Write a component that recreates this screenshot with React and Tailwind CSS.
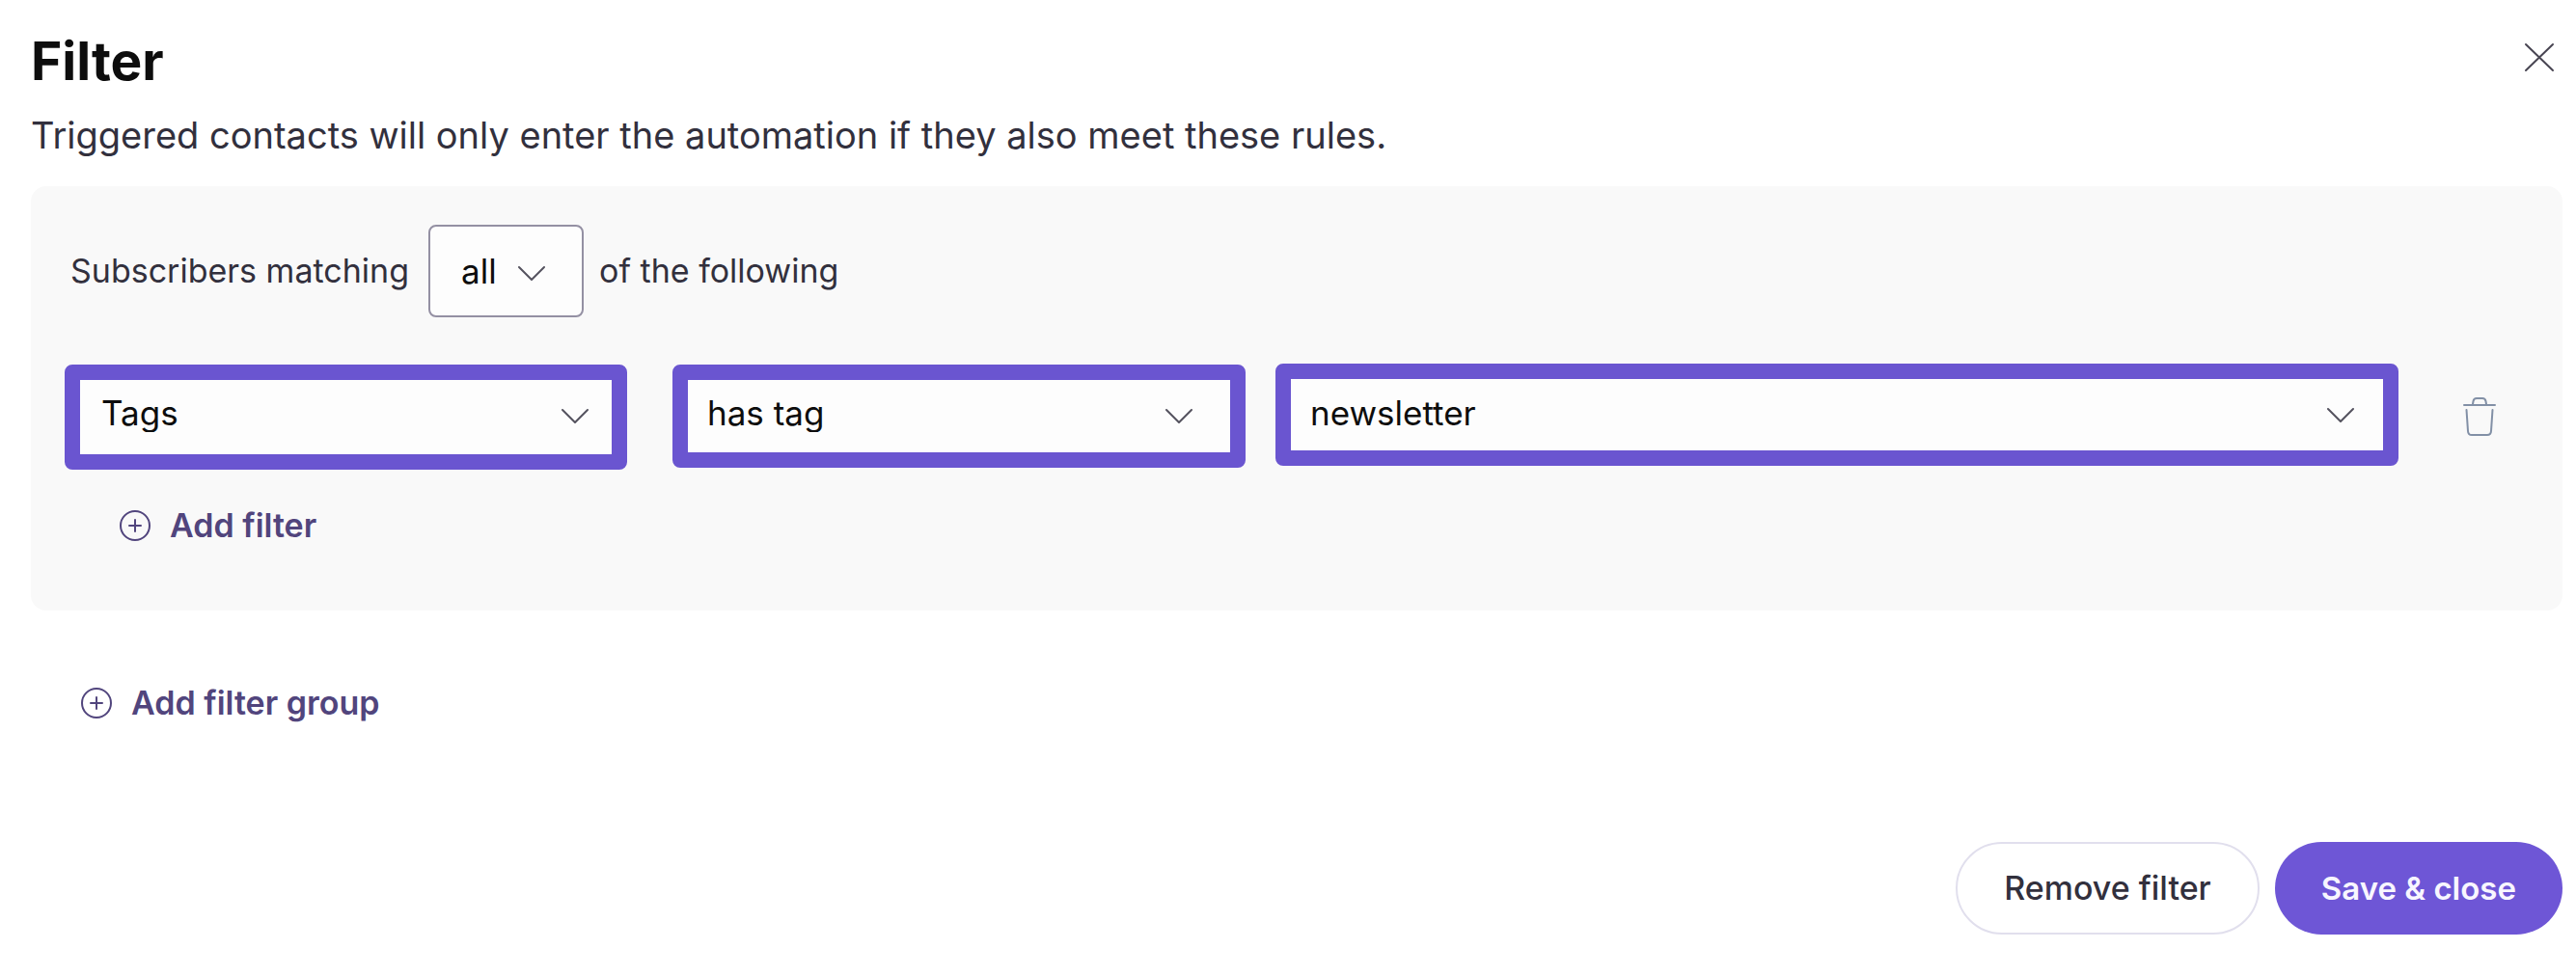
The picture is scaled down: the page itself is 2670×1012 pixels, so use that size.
function Chevron() {
  return (
    <svg className="pointer-events-none h-4 w-[30px] shrink-0" viewBox="0 0 30 16" fill="none" stroke="#55535f" strokeWidth="2" strokeLinecap="round" strokeLinejoin="round" aria-hidden="true">
      <path d="M2 2 15 15 28 2" />
    </svg>
  );
}

function PlusCircle() {
  return (
    <svg className="size-8 shrink-0" viewBox="0 0 32 32" fill="none" stroke="#51457d" strokeWidth="2" strokeLinecap="round" aria-hidden="true">
      <circle cx="16" cy="16" r="15" />
      <path d="M16 10v12M10 16h12" />
    </svg>
  );
}

function HighlightSelect({ label, value, box, text, chevron }) {
  return (
    <div className={`relative rounded-lg border-16 border-[#6a55d0] bg-[#fdfdfd] ${box}`}>
      <select aria-label={label} defaultValue={value} className={`h-full w-full appearance-none bg-transparent text-[35px] leading-10 text-[#0d0d0d] outline-none ${text}`}>
        <option>{value}</option>
      </select>
      <div className={`pointer-events-none absolute top-[29px] ${chevron}`}>
        <Chevron />
      </div>
    </div>
  );
}

export default function App() {
  return (
    <main className="min-h-screen bg-white pt-7 pr-3.5 pb-10 pl-8 font-['Inter','Liberation_Sans',sans-serif] text-[34px] leading-10 text-[#32303d]">
      <header className="flex items-start justify-between">
        <h1 className="text-[55px] leading-[70px] font-bold text-[#0d0d0d]">Filter</h1>
        <button type="button" aria-label="Close" className="mt-4 mr-2">
          <svg className="size-8" viewBox="0 0 32 32" fill="none" stroke="#484552" strokeWidth="2" strokeLinecap="round" aria-hidden="true">
            <path d="M2 2 30 29M30 2 2 29" />
          </svg>
        </button>
      </header>
      <p className="mt-[17px] text-[38px] leading-[50px]">
        Triggered contacts will only enter the automation if they also meet these rules.
      </p>

      <section className="mt-7 rounded-2xl bg-[#f9f9f9] pt-10 pr-[68px] pb-[68px] pl-[35px]">
        <div className="flex items-center pl-1.5">
          <label htmlFor="match" className="mr-5">Subscribers matching</label>
          <div className="relative mr-4">
            <select id="match" defaultValue="all" className="h-24 w-[161px] appearance-none rounded-lg border-2 border-[#9490a3] bg-[#fdfdfd] pl-8 text-[35px] text-[#0d0d0d]">
              <option>all</option>
              <option>any</option>
            </select>
            <div className="pointer-events-none absolute top-[42px] right-[39px]">
              <Chevron />
            </div>
          </div>
          <span>of the following</span>
        </div>

        <div className="mt-12 grid grid-cols-[630fr_625fr_1164fr_auto] items-start">
          <HighlightSelect label="Field" value="Tags" box="mt-px mr-[47px] h-[109px]" text="pl-[22px] pb-2.5" chevron="right-[23px]" />
          <HighlightSelect label="Condition" value="has tag" box="mt-px mr-[31px] h-[107px]" text="pl-5 pb-2" chevron="right-[38px]" />
          <HighlightSelect label="Tag" value="newsletter" box="h-[106px]" text="pl-5 pb-1" chevron="right-[29px]" />
          <button type="button" aria-label="Delete rule" className="mt-[34px] ml-[66px]">
            <svg className="h-[42px] w-9" viewBox="0 0 36 42" fill="none" stroke="#8290a6" strokeWidth="2" strokeLinecap="round" strokeLinejoin="round" aria-hidden="true">
              <path d="M2 9H34M11 8 11.5 5Q12 2 15 2H21Q24 2 24.500 5L25 8M4.500 14 6 36Q6.200 40 10 40H26Q29.800 40 30 36L31.500 14" />
            </svg>
          </button>
        </div>

        <button type="button" className="mt-[38px] ml-[57px] flex items-center gap-5 font-semibold text-[#51457d]">
          <PlusCircle />
          Add filter
        </button>
      </section>

      <button type="button" className="mt-[76px] ml-[52px] flex items-center gap-5 font-semibold text-[#51457d]">
        <PlusCircle />
        Add filter group
      </button>

      <footer className="mt-[124px] flex justify-end gap-4">
        <button type="button" className="h-24 rounded-full border-2 border-[#e1dfed] px-12 font-medium">Remove filter</button>
        <button type="button" className="h-24 rounded-full bg-[#6e56d6] px-12 text-[33px] font-semibold text-[#f8f6ff]">Save &amp; close</button>
      </footer>
    </main>
  );
}
